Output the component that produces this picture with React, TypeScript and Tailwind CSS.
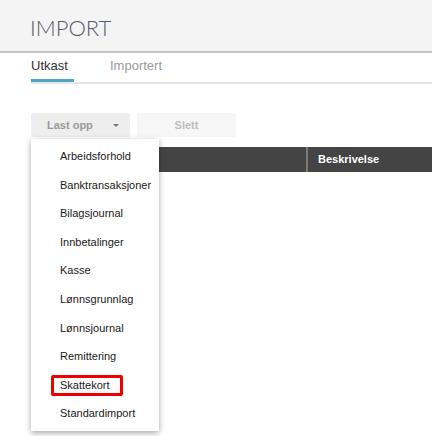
import React from "react";

const items = [
  "Arbeidsforhold",
  "Banktransaksjoner",
  "Bilagsjournal",
  "Innbetalinger",
  "Kasse",
  "Lønnsgrunnlag",
  "Lønnsjournal",
  "Remittering",
  "Skattekort",
  "Standardimport",
];

const App = () => {
  return (
    <div className="w-[432px] h-[436px] bg-white overflow-hidden font-['Liberation_Sans',Arial,sans-serif]">
      <div className="h-[53px] bg-[#f4f4f4] border-b-2 border-[#c4c4c4] pl-[30px] pt-[14px]">
        <h1 className="font-['Lato',sans-serif] font-light text-[22px] leading-[28px] text-[#555a66]">
          IMPORT
        </h1>
      </div>

      <div className="pl-[31px]">
        <div className="flex h-[31px] items-end border-b-2 border-[#e6e6e6]">
          <div className="flex flex-col">
            <span className="text-[13px] leading-[16px] text-[#333] pb-[5px]">Utkast</span>
            <span className="h-[3px] bg-[#4ea5c4] w-[43px]" />
          </div>
          <span className="ml-[36px] text-[13px] leading-[16px] text-[#9a9a9a] pb-[8px]">
            Importert
          </span>
        </div>

        <div className="flex gap-[7px] mt-[29px]">
          <button className="w-[99px] h-[24px] bg-[#eeeeee] rounded-[2px] flex items-center pl-[16px] pr-[11px] text-[11px] font-bold text-[#9a9a9a]">
            <span>Last opp</span>
            <span className="ml-auto w-0 h-0 border-x-[3px] border-x-transparent border-t-[3px] border-t-[#777]" />
          </button>
          <button className="w-[99px] h-[24px] bg-[#f6f6f6] rounded-[2px] text-[11px] font-bold text-[#bdbdbd]">
            Slett
          </button>
        </div>

        <div className="relative mt-[10px]">
          <div className="flex h-[25px] bg-[#444444] text-white text-[11px] font-bold items-center">
            <div className="w-[277px] h-full border-r-2 border-[#7a7a7a]" />
            <div className="pl-[10px]">Beskrivelse</div>
          </div>

          <div className="absolute left-0 top-[-8px] w-[128px] bg-white py-[3px] shadow-[0_2px_6px_rgba(0,0,0,0.35)]">
            {items.map((item) => (
              <div
                key={item}
                className="h-[28.6px] flex items-center pl-[29px] text-[11px] text-[#1a1a1a]"
              >
                {item === "Skattekort" ? (
                  <span className="-ml-[9px] pl-[6px] pr-[10px] h-[21px] flex items-center border-[3px] border-[#ee0000] rounded-[2px]">
                    {item}
                  </span>
                ) : (
                  item
                )}
              </div>
            ))}
          </div>
        </div>
      </div>
    </div>
  );
};

export default App;
